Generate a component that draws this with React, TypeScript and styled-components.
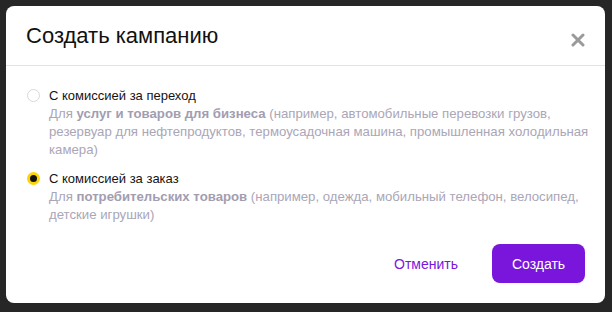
import React, {useState} from "react";
import styled, {createGlobalStyle} from "styled-components";

const Global = createGlobalStyle`
  html, body {
    margin: 0;
    padding: 0;
    background: #262626;
  }
  body {
    font-family: "Liberation Sans", Arial, "Noto Sans", sans-serif;
    -webkit-font-smoothing: antialiased;
  }
`

const Backdrop = styled.div`
  padding: 6px 7px 9px 6px;
  height: 312px;
  box-sizing: border-box;
`
const Dialog = styled.div`
  background: white;
  border-radius: 8px;
  height: 297px;
  display: flex;
  flex-direction: column;
`
const Header = styled.div`
  height: 60px;
  box-sizing: border-box;
  display: flex;
  align-items: center;
  justify-content: space-between;
  padding: 0 20px 0 20px;
  border-bottom: 1px solid #e2e2e4;
`
const Title = styled.h2`
  margin: 0;
  font-size: 22px;
  font-weight: 400;
  color: #111;
`
const Close = styled.button`
  border: none;
  background: none;
  padding: 0;
  margin-top: 8px;
  width: 14px;
  height: 14px;
  cursor: pointer;
  display: flex;
`
const Body = styled.div`
  padding: 21px 14px 0 20px;
  display: flex;
  flex-direction: column;
  gap: 11px;
`
const Option = styled.label`
  display: flex;
  gap: 9px;
  cursor: pointer;
`
const Radio = styled.span<{checked: boolean}>`
  flex: none;
  width: 13px;
  height: 13px;
  margin-top: 2px;
  margin-left: 1px;
  border-radius: 50%;
  box-sizing: border-box;
  border: ${p => p.checked ? '3px solid #ffd400' : '1px solid #d9d9dc'};
  background: ${p => p.checked ? '#111' : 'white'};
`
const Texts = styled.div`
  display: flex;
  flex-direction: column;
`
const Label = styled.div`
  font-size: 13px;
  line-height: 18px;
  color: #141414;
`
const Description = styled.div`
  font-size: 13.2px;
  line-height: 18px;
  color: #aaa6b7;
  > b {
    font-weight: 700;
    color: #a29db0;
  }
`
const Footer = styled.div`
  margin-top: auto;
  display: flex;
  justify-content: flex-end;
  align-items: center;
  gap: 34px;
  padding: 0 20px 20px 0;
`
const TextButton = styled.button`
  border: none;
  background: none;
  font: inherit;
  font-size: 14px;
  color: #7a16db;
  padding: 0;
  cursor: pointer;
`
const PrimaryButton = styled.button`
  border: none;
  border-radius: 8px;
  background: #7a16db;
  color: white;
  font: inherit;
  font-size: 14px;
  width: 93px;
  height: 39px;
  cursor: pointer;
`

const options = [
    {
        id: 'click',
        label: 'С комиссией за переход',
        bold: 'услуг и товаров для бизнеса',
        rest: ' (например, автомобильные перевозки грузов, резервуар для нефтепродуктов, термоусадочная машина, промышленная холодильная камера)'
    },
    {
        id: 'order',
        label: 'С комиссией за заказ',
        bold: 'потребительских товаров',
        rest: ' (например, одежда, мобильный телефон, велосипед, детские игрушки)'
    }
]

function App() {
    const [value, setValue] = useState('order')
    return (
        <Backdrop>
            <Global/>
            <Dialog>
                <Header>
                    <Title>Создать кампанию</Title>
                    <Close aria-label="Закрыть">
                        <svg width="14" height="14" viewBox="0 0 14 14">
                            <path d="M2 2 L12 12 M12 2 L2 12" stroke="#9a9a9a" strokeWidth="3" strokeLinecap="round"/>
                        </svg>
                    </Close>
                </Header>
                <Body>
                    {options.map(o =>
                        <Option key={o.id} onClick={() => setValue(o.id)}>
                            <Radio checked={value === o.id}/>
                            <Texts>
                                <Label>{o.label}</Label>
                                <Description>Для <b>{o.bold}</b>{o.rest}</Description>
                            </Texts>
                        </Option>
                    )}
                </Body>
                <Footer>
                    <TextButton>Отменить</TextButton>
                    <PrimaryButton>Создать</PrimaryButton>
                </Footer>
            </Dialog>
        </Backdrop>
    );
}

export default App;
